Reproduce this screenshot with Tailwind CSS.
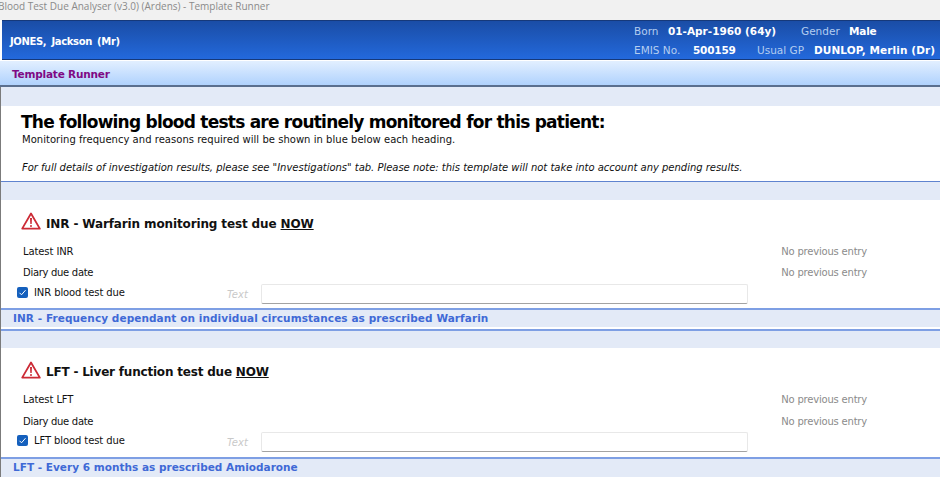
<!DOCTYPE html>
<html lang="en">

<head>
    <meta charset="UTF-8">
    <meta name="viewport" content="width=device-width, initial-scale=1.0">
    <script src="https://cdn.jsdelivr.net/npm/@tailwindcss/browser@4"></script>
    <title>Template Runner</title>
</head>

<body class="h-[477px] w-[940px] overflow-hidden bg-white font-['DejaVu_Sans',sans-serif] text-[10px] text-[#111]">

    <div class="h-5 bg-[#f1f1f1] font-['Open_Sans',sans-serif] text-[10px] leading-[13px] text-[#8a8a8a] whitespace-nowrap -ml-[2px]">Blood Test Due Analyser (v3.0) (Ardens) - Template Runner</div>

    <header class="ml-[2px] h-10 flex justify-between border-y border-[#16397a] bg-linear-to-b from-[#1a4da6] to-[#2369dc] text-white">
        <div class="pl-2 pt-[14px] text-[10px] leading-[13px] font-semibold tracking-[-0.35px] [word-spacing:2px]">JONES, Jackson (Mr)</div>
        <div class="w-[306px] pt-px text-[10.5px] leading-[19px] whitespace-nowrap">
            <div class="flex">
                <span class="w-[34px] text-[#b4cdf0]">Born</span>
                <b class="w-[133px]">01-Apr-1960 (64y)</b>
                <span class="w-[48px] text-[#b4cdf0]">Gender</span>
                <b class="tracking-[-0.2px]">Male</b>
            </div>
            <div class="flex">
                <span class="w-[59px] text-[#b4cdf0]">EMIS No.</span>
                <b class="w-[64px] tracking-[-0.2px]">500159</b>
                <span class="w-[57px] text-[#b4cdf0]">Usual GP</span>
                <b class="tracking-[0.1px]">DUNLOP, Merlin (Dr)</b>
            </div>
        </div>
    </header>

    <div class="mt-px h-[26px] border-b-2 border-[#5a6f8f] bg-linear-to-b from-[#e2efff] to-[#b0d2fd] pl-3 pt-[7px] text-[10.5px] leading-[13px] font-bold tracking-[-0.2px] text-[#7f0a85]">Template Runner</div>

    <main class="border-l border-[#7b7b7b]">
        <div class="h-[19px] bg-[#e3eaf7]"></div>

        <section class="h-[76px] border-b border-[#5f83cf] pl-[20px]">
            <h1 class="pt-[6px] text-[17px] leading-[21px] font-bold tracking-[-0.77px] text-black">The following blood tests are routinely monitored for this patient:</h1>
            <p class="pl-px text-[10px] leading-[13px] tracking-[0.03px]">Monitoring frequency and reasons required will be shown in blue below each heading.</p>
            <p class="mt-[15px] pl-px text-[10px] leading-[13px] tracking-[-0.02px] italic">For full details of investigation results, please see "Investigations" tab. Please note: this template will not take into account any pending results.</p>
        </section>

        <div class="h-[18px] bg-[#e3eaf7]"></div>

        <section class="h-[108px] pt-[11px]">
            <div class="flex items-start pl-5 h-5">
                <svg class="mt-px w-[20px] h-[18px] shrink-0" viewBox="0 0 20 18">
                    <path d="M10 1.5 18.8 16.6H1.2Z" fill="#fff" stroke="#cc2b36" stroke-width="1.8" stroke-linejoin="round" />
                    <path d="M9 6h2l-.3 6H9.3Z" fill="#cc2b36" />
                    <circle cx="10" cy="14" r="1" fill="#cc2b36" />
                </svg>
                <h2 class="ml-[5px] pt-[3px] text-[12px] leading-5 font-bold tracking-[-0.13px]">INR - Warfarin monitoring test due <span class="underline">NOW</span></h2>
            </div>
            <div class="mt-[9px] flex h-[22px] items-center justify-between pl-[22px] pr-[73px]">
                <span class="tracking-[-0.1px]">Latest INR</span>
                <span class="tracking-[-0.2px] text-[#8b8b8b]">No previous entry</span>
            </div>
            <div class="flex h-5 items-center justify-between pl-[22px] pr-[73px]">
                <span class="tracking-[-0.3px]">Diary due date</span>
                <span class="tracking-[-0.2px] text-[#8b8b8b]">No previous entry</span>
            </div>
            <div class="flex h-5 items-center pl-4">
                <span class="flex h-[11px] w-[11px] items-center justify-center rounded-[2px] bg-[#1560bd]">
                    <svg class="h-[9px] w-[9px]" viewBox="0 0 9 9" fill="none">
                        <path d="M1.5 4.8 3.5 6.8 7.5 2.2" stroke="#fff" stroke-width="1" />
                    </svg>
                </span>
                <span class="ml-[6px] w-[193px] tracking-[-0.1px]">INR blood test due</span>
                <span class="mt-1 w-[34px] text-[#c9c9c9] italic">Text</span>
                <span class="mt-1 h-5 w-[487px] rounded-[2px] border border-[#e8e8e8] border-b-[#a3a3a3]"></span>
            </div>
        </section>

        <div class="h-[23px] border-y-2 border-[#7e9fe4] pb-[2px]">
            <div class="flex h-full items-center bg-[#e3eaf7] pl-3 text-[10.5px] font-bold tracking-[0.08px] text-[#3f69d6]">INR - Frequency dependant on individual circumstances as prescribed Warfarin</div>
        </div>
        <div class="h-[17px] bg-[#e3eaf7]"></div>

        <section class="h-[109px] pt-[12px]">
            <div class="flex items-start pl-5 h-5">
                <svg class="mt-px w-[20px] h-[18px] shrink-0" viewBox="0 0 20 18">
                    <path d="M10 1.5 18.8 16.6H1.2Z" fill="#fff" stroke="#cc2b36" stroke-width="1.8" stroke-linejoin="round" />
                    <path d="M9 6h2l-.3 6H9.3Z" fill="#cc2b36" />
                    <circle cx="10" cy="14" r="1" fill="#cc2b36" />
                </svg>
                <h2 class="ml-[5px] pt-[2px] text-[12px] leading-5 font-bold tracking-[-0.2px]">LFT - Liver function test due <span class="underline">NOW</span></h2>
            </div>
            <div class="mt-[8px] flex h-[22px] items-center justify-between pl-[22px] pr-[73px]">
                <span class="tracking-[-0.1px]">Latest LFT</span>
                <span class="tracking-[-0.2px] text-[#8b8b8b]">No previous entry</span>
            </div>
            <div class="flex h-[22px] items-center justify-between pl-[22px] pr-[73px]">
                <span class="tracking-[-0.3px]">Diary due date</span>
                <span class="tracking-[-0.2px] text-[#8b8b8b]">No previous entry</span>
            </div>
            <div class="flex h-[16px] items-center pl-4">
                <span class="flex h-[11px] w-[11px] items-center justify-center rounded-[2px] bg-[#1560bd]">
                    <svg class="h-[9px] w-[9px]" viewBox="0 0 9 9" fill="none">
                        <path d="M1.5 4.8 3.5 6.8 7.5 2.2" stroke="#fff" stroke-width="1" />
                    </svg>
                </span>
                <span class="ml-[6px] w-[193px] tracking-[-0.1px]">LFT blood test due</span>
                <span class="mt-1 w-[34px] text-[#c9c9c9] italic">Text</span>
                <span class="mt-1 h-5 w-[487px] shrink-0 rounded-[2px] border border-[#e8e8e8] border-b-[#a3a3a3]"></span>
            </div>
        </section>

        <div class="flex h-[20px] items-center border-t-2 border-[#7e9fe4] bg-[#e3eaf7] pl-3 text-[10.5px] font-bold tracking-[0.02px] text-[#3f69d6]">LFT - Every 6 months as prescribed Amiodarone</div>
    </main>
</body>

</html>
